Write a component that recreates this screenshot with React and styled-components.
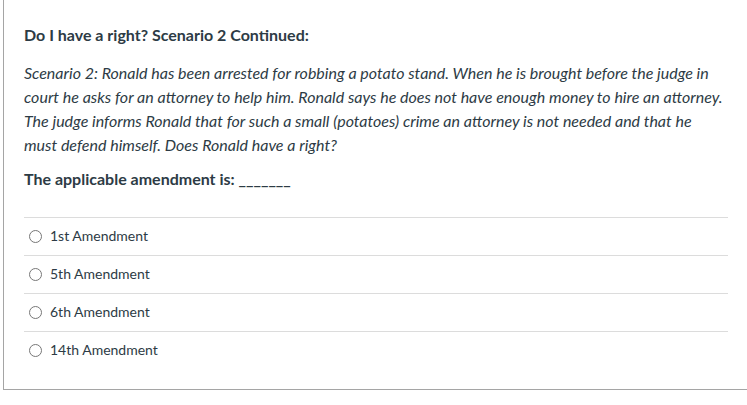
import React from "react";
import styled, { createGlobalStyle } from "styled-components";

const Global = createGlobalStyle`
  html, body { margin: 0; padding: 0; background: #fff; }
  body { font-family: Lato, "Open Sans", sans-serif; color: #2d3b45; }
`;

const Frame = styled.div`
  margin-left: 3px;
  width: 780px;
  height: 390px;
  box-sizing: border-box;
  border-left: 1px solid #a5a5a5;
  border-bottom: 1px solid #a5a5a5;
  padding: 23px 0 0 20px;
`;

const Content = styled.div`
  width: 704px;
`;

const Title = styled.div`
  font-size: 16px;
  font-weight: 700;
  line-height: 24px;
  margin: 0 0 14px;
`;

const Scenario = styled.p`
  font-size: 16px;
  font-style: italic;
  line-height: 24px;
  margin: 0 0 10px;
`;

const Prompt = styled.div`
  font-size: 16px;
  font-weight: 700;
  line-height: 24px;
  margin: 0 0 26px;
`;

const Answers = styled.div`
  display: flex;
  flex-direction: column;
`;

const Answer = styled.label`
  display: flex;
  align-items: center;
  gap: 8px;
  height: 38px;
  box-sizing: border-box;
  border-top: 1px solid #dcdcdc;
  padding: 0 0 3px 5px;
  font-size: 14px;
`;

const Radio = styled.span`
  width: 11px;
  height: 11px;
  border: 1px solid #777;
  border-radius: 50%;
  flex: none;
  margin-top: 2px;
`;

const options = ["1st Amendment", "5th Amendment", "6th Amendment", "14th Amendment"];

export default function App() {
  return (
    <>
      <Global />
      <Frame>
        <Content>
          <Title>Do I have a right? Scenario 2 Continued:</Title>
          <Scenario>
            Scenario 2: Ronald has been arrested for robbing a potato stand. When he is brought before the judge in
            court he asks for an attorney to help him. Ronald says he does not have enough money to hire an attorney.
            The judge informs Ronald that for such a small (potatoes) crime an attorney is not needed and that he
            must defend himself. Does Ronald have a right?
          </Scenario>
          <Prompt>The applicable amendment is: _______</Prompt>
          <Answers>
            {options.map((o) => (
              <Answer key={o}>
                <Radio />
                {o}
              </Answer>
            ))}
          </Answers>
        </Content>
      </Frame>
    </>
  );
}
